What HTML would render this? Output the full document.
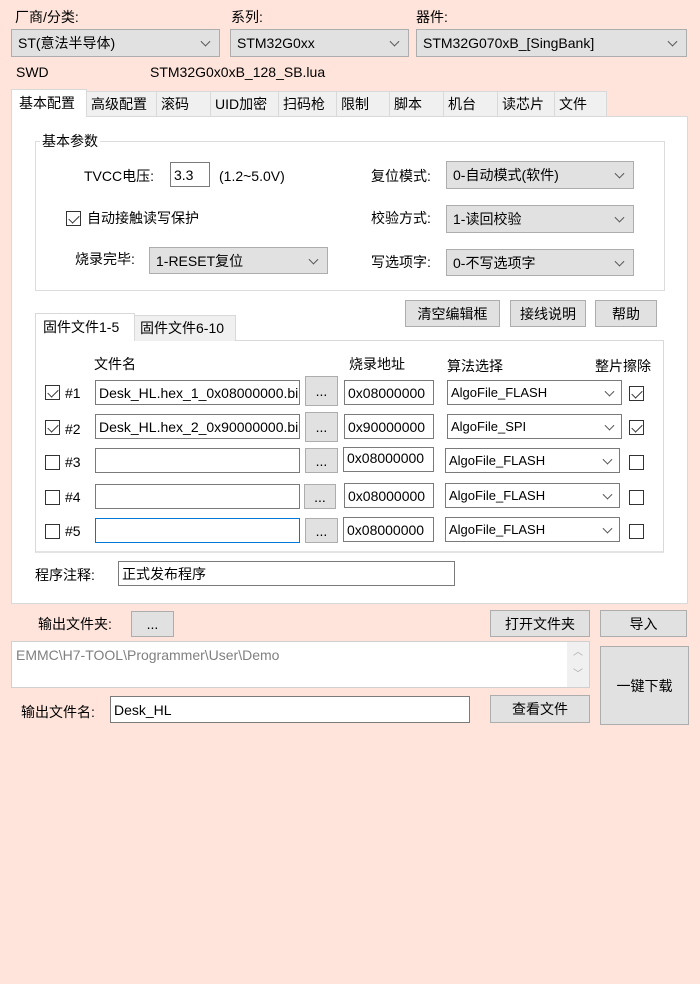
<!DOCTYPE html>
<html><head><meta charset="utf-8">
<style>
*{box-sizing:border-box;margin:0;padding:0}
body{width:700px;height:984px;background:#ffe4db;position:relative;overflow:hidden;font-family:"Liberation Sans","Noto Sans CJK SC",sans-serif;font-size:14px;color:#000}
.a{position:absolute;white-space:nowrap}
.t{line-height:16px}
.cb{position:absolute;background:#e1e1e1;border:1px solid #adadad;padding-left:6px;display:flex;align-items:center;font-size:14px}
.cb::after{content:"";position:absolute;right:10px;top:50%;width:6px;height:6px;border-right:1px solid #555;border-bottom:1px solid #555;transform:translateY(-70%) rotate(45deg)}
.cbw{position:absolute;background:#fff;border:1px solid #7a7a7a;padding-left:3px;display:flex;align-items:center;font-size:13px}
.cbw::after{content:"";position:absolute;right:8px;top:50%;width:6px;height:6px;border-right:1px solid #555;border-bottom:1px solid #555;transform:translateY(-70%) rotate(45deg)}
.in{position:absolute;background:#fff;border:1px solid #7a7a7a;padding-left:3px;display:flex;align-items:center;font-size:14px}
.bt{position:absolute;background:#e1e1e1;border:1px solid #adadad;display:flex;align-items:center;justify-content:center;font-size:14px}
.tab{position:absolute;top:91px;height:25px;background:#f0f0f0;border:1px solid #d9d9d9;border-bottom:none;padding-left:4px;line-height:24px;font-size:14px}
.ck{position:absolute;width:15px;height:15px;border:1px solid #333;background:#fff}
.ck.on::after{content:"";position:absolute;left:4px;top:1px;width:5px;height:9px;border-right:1.3px solid #333;border-bottom:1.3px solid #333;transform:rotate(45deg)}
</style></head><body>
<div class="a t" style="left:15px;top:9px">厂商/分类:</div>
<div class="a t" style="left:231px;top:9px">系列:</div>
<div class="a t" style="left:416px;top:9px">器件:</div>
<div class="cb" style="left:11px;top:29px;width:209px;height:28px">ST(意法半导体)</div>
<div class="cb" style="left:230px;top:29px;width:179px;height:28px">STM32G0xx</div>
<div class="cb" style="left:416px;top:29px;width:271px;height:28px">STM32G070xB_[SingBank]</div>
<div class="a t" style="left:16px;top:64px">SWD</div>
<div class="a t" style="left:150px;top:64px">STM32G0x0xB_128_SB.lua</div>

<div class="a" style="left:11px;top:116px;width:677px;height:488px;background:#fff;border:1px solid #d9d9d9"></div>
<div class="tab" style="left:86px;width:71px">高级配置</div>
<div class="tab" style="left:156px;width:55px">滚码</div>
<div class="tab" style="left:210px;width:69px">UID加密</div>
<div class="tab" style="left:278px;width:59px">扫码枪</div>
<div class="tab" style="left:336px;width:54px">限制</div>
<div class="tab" style="left:389px;width:55px">脚本</div>
<div class="tab" style="left:443px;width:55px">机台</div>
<div class="tab" style="left:497px;width:58px">读芯片</div>
<div class="tab" style="left:554px;width:53px">文件</div>
<div class="tab" style="left:11px;top:89px;height:28px;width:76px;background:#fff;line-height:26px;padding-left:7px">基本配置</div>

<div class="a" style="left:35px;top:141px;width:630px;height:150px;border:1px solid #dcdcdc"></div>
<div class="a t" style="left:40px;top:133px;background:#fff;padding:0 2px">基本参数</div>
<div class="a t" style="left:84px;top:168px">TVCC电压:</div>
<div class="in" style="left:170px;top:162px;width:40px;height:25px">3.3</div>
<div class="a t" style="left:219px;top:168px">(1.2~5.0V)</div>
<div class="ck on" style="left:66px;top:211px"></div>
<div class="a t" style="left:87px;top:210px">自动接触读写保护</div>
<div class="a t" style="left:75px;top:251px">烧录完毕:</div>
<div class="cb" style="left:149px;top:247px;width:179px;height:27px">1-RESET复位</div>
<div class="a t" style="left:371px;top:168px">复位模式:</div>
<div class="cb" style="left:446px;top:161px;width:188px;height:28px">0-自动模式(软件)</div>
<div class="a t" style="left:371px;top:210px">校验方式:</div>
<div class="cb" style="left:446px;top:205px;width:188px;height:28px">1-读回校验</div>
<div class="a t" style="left:371px;top:254px">写选项字:</div>
<div class="cb" style="left:446px;top:249px;width:188px;height:27px">0-不写选项字</div>

<div class="bt" style="left:405px;top:300px;width:95px;height:27px">清空编辑框</div>
<div class="bt" style="left:510px;top:300px;width:76px;height:27px">接线说明</div>
<div class="bt" style="left:595px;top:300px;width:62px;height:27px">帮助</div>

<div class="a" style="left:35px;top:340px;width:629px;height:213px;border:1px solid #d9d9d9;border-bottom:2px solid #e3e3e3"></div>
<div class="a" style="left:134px;top:315px;width:102px;height:26px;background:#f0f0f0;border:1px solid #d9d9d9;border-bottom:none;line-height:24px;padding-left:5px">固件文件6-10</div>
<div class="a" style="left:35px;top:313px;width:100px;height:28px;background:#fff;border:1px solid #d9d9d9;border-bottom:none;line-height:26px;padding-left:7px">固件文件1-5</div>

<div class="a t" style="left:94px;top:356px">文件名</div>
<div class="a t" style="left:349px;top:356px">烧录地址</div>
<div class="a t" style="left:447px;top:358px">算法选择</div>
<div class="a t" style="left:595px;top:358px">整片擦除</div>

<!-- rows -->
<div class="ck on" style="left:45px;top:385px"></div><div class="a t" style="left:65px;top:385px">#1</div>
<div class="in" style="left:95px;top:380px;width:205px;height:25px;overflow:hidden">Desk_HL.hex_1_0x08000000.bi</div>
<div class="bt" style="left:305px;top:376px;width:33px;height:30px;color:#000">...</div>
<div class="in" style="left:344px;top:380px;width:90px;height:25px">0x08000000</div>
<div class="cbw" style="left:447px;top:380px;width:175px;height:25px">AlgoFile_FLASH</div>
<div class="ck on" style="left:629px;top:386px"></div>

<div class="ck on" style="left:45px;top:420px"></div><div class="a t" style="left:65px;top:421px">#2</div>
<div class="in" style="left:95px;top:414px;width:205px;height:25px;overflow:hidden">Desk_HL.hex_2_0x90000000.bi</div>
<div class="bt" style="left:305px;top:412px;width:33px;height:30px">...</div>
<div class="in" style="left:344px;top:414px;width:90px;height:25px">0x90000000</div>
<div class="cbw" style="left:447px;top:414px;width:175px;height:25px">AlgoFile_SPI</div>
<div class="ck on" style="left:629px;top:420px"></div>

<div class="ck" style="left:45px;top:455px"></div><div class="a t" style="left:65px;top:454px">#3</div>
<div class="in" style="left:95px;top:448px;width:205px;height:25px"></div>
<div class="bt" style="left:305px;top:448px;width:33px;height:25px">...</div>
<div class="in" style="left:343px;top:447px;width:91px;height:25px;align-items:flex-start;padding-top:2px">0x08000000</div>
<div class="cbw" style="left:445px;top:448px;width:175px;height:25px">AlgoFile_FLASH</div>
<div class="ck" style="left:629px;top:455px"></div>

<div class="ck" style="left:45px;top:490px"></div><div class="a t" style="left:65px;top:489px">#4</div>
<div class="in" style="left:95px;top:484px;width:205px;height:25px"></div>
<div class="bt" style="left:304px;top:484px;width:32px;height:25px">...</div>
<div class="in" style="left:344px;top:483px;width:90px;height:25px">0x08000000</div>
<div class="cbw" style="left:445px;top:483px;width:175px;height:25px">AlgoFile_FLASH</div>
<div class="ck" style="left:629px;top:490px"></div>

<div class="ck" style="left:45px;top:524px"></div><div class="a t" style="left:65px;top:523px">#5</div>
<div class="in" style="left:95px;top:518px;width:205px;height:25px;border-color:#0078d7"></div>
<div class="bt" style="left:305px;top:518px;width:33px;height:25px">...</div>
<div class="in" style="left:343px;top:517px;width:91px;height:25px">0x08000000</div>
<div class="cbw" style="left:445px;top:517px;width:175px;height:25px">AlgoFile_FLASH</div>
<div class="ck" style="left:629px;top:524px"></div>

<div class="a t" style="left:35px;top:567px">程序注释:</div>
<div class="in" style="left:118px;top:561px;width:337px;height:25px">正式发布程序</div>

<div class="a t" style="left:38px;top:616px">输出文件夹:</div>
<div class="bt" style="left:131px;top:611px;width:43px;height:26px">...</div>
<div class="bt" style="left:490px;top:610px;width:100px;height:27px">打开文件夹</div>
<div class="bt" style="left:600px;top:610px;width:87px;height:27px">导入</div>
<div class="a" style="left:11px;top:641px;width:579px;height:47px;background:#fff;border:1px solid #d0d0d0"></div>
<div class="a t" style="left:16px;top:647px;color:#808080">EMMC\H7-TOOL\Programmer\User\Demo</div>
<div class="a" style="left:567px;top:642px;width:22px;height:45px;background:#f0f0f0;color:#aaa;font-size:10px;text-align:center;line-height:22px">︿<br>﹀</div>
<div class="bt" style="left:600px;top:646px;width:89px;height:79px">一键下载</div>
<div class="a t" style="left:21px;top:704px">输出文件名:</div>
<div class="in" style="left:110px;top:696px;width:360px;height:27px">Desk_HL</div>
<div class="bt" style="left:490px;top:695px;width:100px;height:28px">查看文件</div>
</body></html>
